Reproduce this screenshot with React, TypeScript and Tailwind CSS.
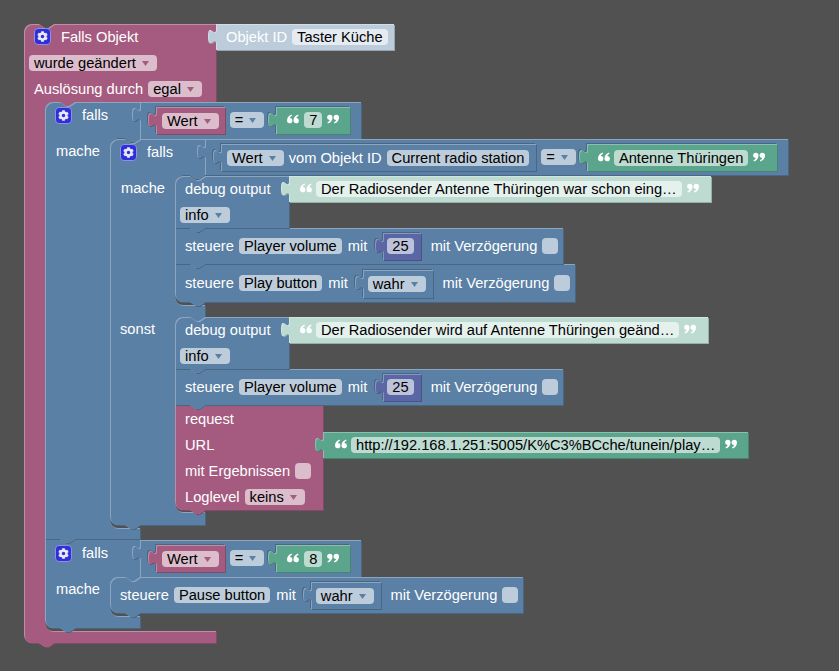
import { ReactNode } from "react";
import { FaCog } from "react-icons/fa";

const notch = "l 6,4 3,0 6,-4";
const tabBack = "l -6,4 -3,0 -6,-4";
const puzzle = "c 0,-10 -8,8 -8,-7.5 s 8,2.5 8,-7.5";

// Statement opening, walked from the right edge back to the left and down
const inner = (x: number, bottom: number, right: number) =>
  `H ${x + 30} ${tabBack} H ${x + 8} a 8,8 0 0 0 -8,8 V ${bottom - 8} a 8,8 0 0 0 8,8 H ${right}`;

const stack = (x: number, y: number, r: number, b: number, roundTop = false, roundBottom = false) =>
  `M ${x},${y + (roundTop ? 8 : 0)} ${roundTop ? "a 8,8 0 0 1 8,-8" : ""} H ${x + 15} ${notch} H ${r} V ${b} H ${x + 30} ${tabBack} H ${
    x + (roundBottom ? 8 : 0)
  } ${roundBottom ? "a 8,8 0 0 1 -8,-8" : ""} z`;

const value = (x: number, y: number, r: number, b: number) =>
  `M ${x},${y} H ${r} V ${b} H ${x} V ${y + 20} ${puzzle} V ${y} z`;

const crimson = { main: "#a55b80", light: "#c08ca6", dark: "#844966" };
const blue = { main: "#5b80a5", light: "#8ca6c0", dark: "#496684" };
const green = { main: "#5ba58c", light: "#8cc0ae", dark: "#498470" };
const indigo = { main: "#5b67a5", light: "#8c95c0", dark: "#495284" };
const paleGreen = { main: "#bddbd1", light: "#d1e6df", dark: "#97afa7" };
const paleBlue = { main: "#bdccdb", light: "#d1dce6", dark: "#97a3af" };

type Shape = { d: string; c: typeof blue; hole?: boolean };

// painted in this order, parents first, the lower block of a stack before the upper one
const shapes: Shape[] = [
  {
    c: crimson,
    d: `M 24,32 a 8,8 0 0 1 8,-8 H 39 ${notch} H 216 V 102 ${inner(45, 631, 216)} V 643 H 54 ${tabBack} H 32 a 8,8 0 0 1 -8,-8 z`,
  },
  { c: paleBlue, d: value(216, 24, 394, 50) },
  {
    c: blue,
    d: `M 45,539 H 60 ${notch} H 140 V 577 ${inner(110, 616, 140)} V 628 H 75 ${tabBack} H 53 a 8,8 0 0 1 -8,-8 z`,
  },
  { c: blue, d: value(140, 540, 361, 577) },
  { c: crimson, d: value(156, 545, 225, 572), hole: true },
  { c: green, d: value(276, 545, 350, 572), hole: true },
  { c: blue, d: stack(110, 577, 523, 613, true, true) },
  { c: blue, d: value(311, 582, 381, 609), hole: true },
  {
    c: blue,
    d: `M 45,110 a 8,8 0 0 1 8,-8 H 60 ${notch} H 140 V 138 ${inner(110, 528, 140)} V 539 H 75 ${tabBack} H 45 z`,
  },
  { c: blue, d: value(140, 102, 361, 139) },
  { c: crimson, d: value(156, 107, 225, 134), hole: true },
  { c: green, d: value(276, 107, 350, 134), hole: true },
  {
    c: blue,
    d: `M 110,147 a 8,8 0 0 1 8,-8 H 125 ${notch} H 205 V 175 ${inner(175, 305, 205)} V 317 ${inner(175, 512, 205)} V 525 H 140 ${tabBack} H 118 a 8,8 0 0 1 -8,-8 z`,
  },
  { c: blue, d: value(205, 139, 788, 175) },
  { c: blue, d: value(221, 144, 536, 171), hole: true },
  { c: green, d: value(587, 144, 777, 171), hole: true },
  { c: blue, d: stack(175, 264, 575, 302, false, true) },
  { c: blue, d: value(363, 270, 433, 298), hole: true },
  { c: blue, d: stack(175, 228, 563, 264) },
  { c: indigo, d: value(383, 233, 421, 260), hole: true },
  { c: blue, d: stack(175, 176, 289, 228, true) },
  { c: paleGreen, d: value(289, 176, 711, 202) },
  { c: crimson, d: stack(175, 405, 323, 510, false, true) },
  { c: green, d: value(323, 432, 748, 458) },
  { c: blue, d: stack(175, 369, 563, 405) },
  { c: indigo, d: value(383, 374, 421, 401), hole: true },
  { c: blue, d: stack(175, 317, 289, 369, true) },
  { c: paleGreen, d: value(289, 317, 708, 343) },
];

function Blocks() {
  return (
    <svg width={839} height={671} className="absolute left-0 top-0">
      {shapes.map((s, i) => (
        <g key={i}>
          <clipPath id={`blk-${i}`}>
            <path d={s.d} />
          </clipPath>
          {s.hole && <path d={s.d} fill="#496684" transform="translate(-1,-1)" />}
          <path d={s.d} fill={s.c.dark} transform="translate(1,1)" />
          <path d={s.d} fill={s.c.light} />
          <g clipPath={`url(#blk-${i})`}>
            <path d={s.d} fill={s.c.main} transform="translate(1,1)" />
          </g>
        </g>
      ))}
    </svg>
  );
}

// The field row of a block; the row sits on the canvas with its block
function Row({ className, children }: { className: string; children: ReactNode }) {
  return <div className={`absolute flex h-4 items-start gap-[5px] whitespace-pre leading-4 text-white ${className}`}>{children}</div>;
}

function Pill({ className = "", arrow, children }: { className?: string; arrow?: string; children: ReactNode }) {
  return (
    <div className={`flex h-4 shrink-0 items-center rounded-[4px] pl-[5px] text-black ${arrow ? "pr-[8px]" : "pr-[5px]"} ${className}`}>
      <span>{children}</span>
      {arrow && (
        <svg width={7} height={5} viewBox="0 0 7 5" className="ml-[6px]">
          <path d="M0,0 H7 L3.5,5 z" fill={arrow} />
        </svg>
      )}
    </div>
  );
}

const BluePill = (p: { className?: string; children: ReactNode }) => <Pill {...p} arrow="#5b80a5" className={`bg-[#bdccdb] ${p.className ?? ""}`} />;
const RedPill = (p: { className?: string; children: ReactNode }) => <Pill {...p} arrow="#a55b80" className={`bg-[#dbbdcc] ${p.className ?? ""}`} />;

function Check({ className }: { className: string }) {
  return <div className={`h-4 w-4 shrink-0 rounded-[4px] ${className}`} />;
}

function Gear({ className = "" }: { className?: string }) {
  return (
    <div className={`mr-[5px] flex h-[17px] w-[17px] shrink-0 items-center justify-center rounded-[4px] border border-[#8f8fe6] bg-[#2f2fd8] text-[#e8e8ff] ${className}`}>
      <FaCog size={11} />
    </div>
  );
}

function Quote({ className = "", close }: { className?: string; close?: boolean }) {
  const mark = "M4.6,0.5 C1.8,1.4 0,3.8 0,6.6 A2.7,2.7 0 1 0 2.9,3.9 C3.1,3 3.8,2.2 5,1.7 Z";
  return (
    <svg width={12} height={10} viewBox="0 0 12 10" className={`mt-[2px] shrink-0 ${close ? "rotate-180" : ""} ${className}`}>
      <path d={mark} fill="#fff" />
      <path d={mark} fill="#fff" transform="translate(6.5,0)" />
    </svg>
  );
}

export default function App() {
  return (
    <div className="relative h-[671px] w-[839px] overflow-hidden bg-[#515151] font-['Liberation_Sans',Arial,sans-serif] text-[11pt]">
      <Blocks />

      {/* Falls Objekt */}
      <div className="absolute left-[29px] top-[29px] flex flex-col gap-[10px] whitespace-pre leading-4 text-white">
        <div className="flex h-4 items-start gap-[5px] pl-[5px]">
          <Gear className="-mt-px" />
          <span>Falls Objekt</span>
        </div>
        <div className="flex h-4">
          <RedPill>wurde geändert</RedPill>
        </div>
        <div className="flex h-4 gap-[5px] pl-[5px]">
          <span>Auslösung durch</span>
          <RedPill>egal</RedPill>
        </div>
      </div>
      <Row className="left-[226px] top-[29px]">
        <span>Objekt ID</span>
        <Pill className="bg-[#e5ebf1]">Taster Küche</Pill>
      </Row>

      {/* falls Wert = 7 */}
      <Row className="left-[55px] top-[107px]">
        <Gear />
        <span>falls</span>
      </Row>
      <Row className="left-[162px] top-[112px]">
        <RedPill className="mt-px">Wert</RedPill>
        <BluePill className="ml-[6px]">=</BluePill>
        <Quote className="ml-[18px]" />
        <Pill className="bg-[#bddbd1]">7</Pill>
        <Quote close />
      </Row>
      <Row className="left-[56px] top-[143px]">mache</Row>

      {/* falls Wert vom Objekt ID */}
      <Row className="left-[120px] top-[144px]">
        <Gear />
        <span>falls</span>
      </Row>
      <Row className="left-[227px] top-[150px]">
        <BluePill>Wert</BluePill>
        <span>vom Objekt ID</span>
        <Pill className="bg-[#bdccdb]">Current radio station</Pill>
        <BluePill className="-mt-px ml-[7px]">=</BluePill>
        <Quote className="ml-[17px]" />
        <Pill className="-ml-px bg-[#bddbd1]">Antenne Thüringen</Pill>
        <Quote close />
      </Row>
      <Row className="left-[121px] top-[180px]">mache</Row>

      <div className="absolute left-[180px] top-[181px] flex flex-col items-start gap-[10px] whitespace-pre leading-4 text-white">
        <span className="h-4 pl-[5px]">debug output</span>
        <BluePill>info</BluePill>
      </div>
      <Row className="left-[300px] top-[181px]">
        <Quote />
        <Pill className="-ml-px bg-[#e5f1ed]">Der Radiosender Antenne Thüringen war schon eing…</Pill>
        <Quote close />
      </Row>

      <Row className="left-[185px] top-[238px]">
        <span>steuere</span>
        <Pill className="bg-[#bdccdb]">Player volume</Pill>
        <span className="ml-px">mit</span>
        <Pill className="ml-[15px] bg-[#bdc2db]">25</Pill>
        <span className="ml-[12px]">mit Verzögerung</span>
        <Check className="bg-[#bdccdb]" />
      </Row>

      <Row className="left-[185px] top-[275px]">
        <span>steuere</span>
        <Pill className="bg-[#bdccdb]">Play button</Pill>
        <span className="ml-px">mit</span>
        <BluePill className="ml-[15px] mt-px">wahr</BluePill>
        <span className="ml-[12px]">mit Verzögerung</span>
        <Check className="bg-[#bdccdb]" />
      </Row>

      {/* sonst */}
      <Row className="left-[120px] top-[321px]">sonst</Row>
      <div className="absolute left-[180px] top-[322px] flex flex-col items-start gap-[10px] whitespace-pre leading-4 text-white">
        <span className="h-4 pl-[5px]">debug output</span>
        <BluePill>info</BluePill>
      </div>
      <Row className="left-[300px] top-[322px]">
        <Quote />
        <Pill className="-ml-px bg-[#e5f1ed]">Der Radiosender wird auf Antenne Thüringen geänd…</Pill>
        <Quote close />
      </Row>

      <Row className="left-[185px] top-[379px]">
        <span>steuere</span>
        <Pill className="bg-[#bdccdb]">Player volume</Pill>
        <span className="ml-px">mit</span>
        <Pill className="ml-[15px] bg-[#bdc2db]">25</Pill>
        <span className="ml-[12px]">mit Verzögerung</span>
        <Check className="bg-[#bdccdb]" />
      </Row>

      <div className="absolute left-[185px] top-[411px] flex flex-col gap-[10px] whitespace-pre leading-4 text-white">
        <span className="h-4">request</span>
        <span className="h-4">URL</span>
        <div className="flex h-4 gap-[5px]">
          <span>mit Ergebnissen</span>
          <Check className="bg-[#dbbdcc]" />
        </div>
        <div className="flex h-4 gap-[5px]">
          <span>Loglevel</span>
          <RedPill>keins</RedPill>
        </div>
      </div>
      <Row className="left-[335px] top-[437px]">
        <Quote />
        <Pill className="-ml-px bg-[#bddbd1]">http://192.168.1.251:5005/K%C3%BCche/tunein/play…</Pill>
        <Quote close />
      </Row>

      {/* falls Wert = 8 */}
      <Row className="left-[55px] top-[545px]">
        <Gear />
        <span>falls</span>
      </Row>
      <Row className="left-[162px] top-[551px]">
        <RedPill>Wert</RedPill>
        <BluePill className="-mt-px ml-[6px]">=</BluePill>
        <Quote className="ml-[18px]" />
        <Pill className="bg-[#bddbd1]">8</Pill>
        <Quote close />
      </Row>
      <Row className="left-[56px] top-[581px]">mache</Row>

      <Row className="left-[120px] top-[587px]">
        <span>steuere</span>
        <Pill className="bg-[#bdccdb]">Pause button</Pill>
        <span className="ml-px">mit</span>
        <BluePill className="ml-[15px] mt-px">wahr</BluePill>
        <span className="ml-[12px]">mit Verzögerung</span>
        <Check className="bg-[#bdccdb]" />
      </Row>
    </div>
  );
}
